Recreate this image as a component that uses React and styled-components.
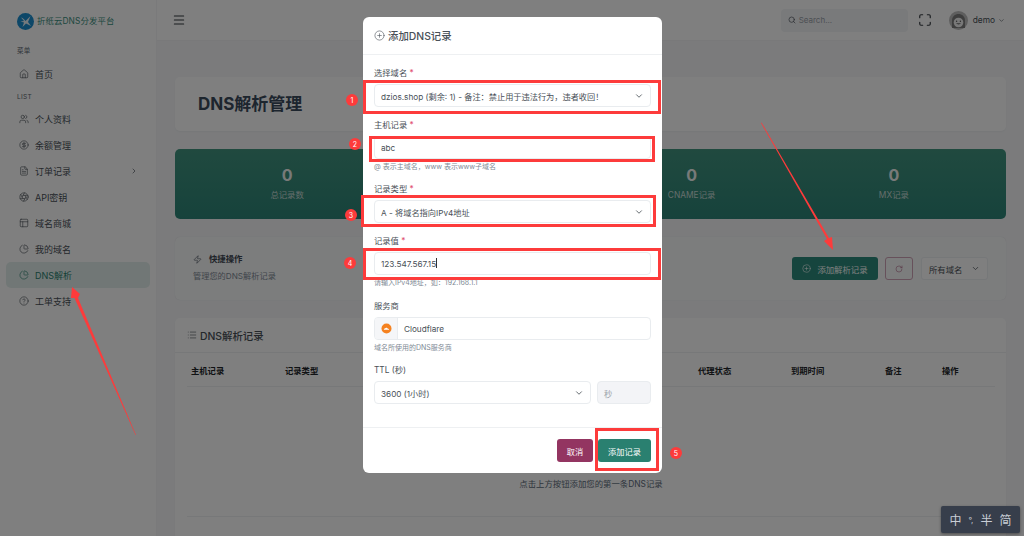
import React from "react";
import styled, { createGlobalStyle } from "styled-components";
import {
  House, Users, CircleDollarSign, FileText, Aperture, PanelsTopLeft, ChartPie, CircleHelp,
  ChevronRight, ChevronDown, Search, Maximize, CirclePlus, RotateCw, Zap, List, Menu,
} from "lucide-react";

const Global = createGlobalStyle`
  html, body { margin: 0; padding: 0; background: #fff; }
  * { box-sizing: border-box; }
  body { font-family: Inter, "Noto Sans CJK SC", sans-serif; color: #495057; }
`;

const Page = styled.div`
  position: relative; width: 1024px; height: 536px; overflow: hidden; display: flex; background: #fff;
`;
const Sidebar = styled.aside`
  width: 157px; flex: none; height: 100%; background: #fff; border-right: 1px solid #f4f4f6;
  padding: 13px 6px 0; display: flex; flex-direction: column;
`;
const Brand = styled.div`
  display: flex; align-items: center; gap: 3px; height: 17px; padding-left: 11px; margin-bottom: 14px;
  font-size: 8.4px; color: #3a8f7e; letter-spacing: .1px; line-height: 14px;
`;
const BrandText = styled.span`position: relative; top: -1px;`;
const SectionLabel = styled.div`
  font-size: 6.5px; height: 14px; line-height: 14px; color: #5c6670; padding-left: 11px; letter-spacing: .3px;
  margin-top: ${p => p.$top || 0}px; margin-bottom: ${p => p.$bottom || 2}px;
`;
const NavItem = styled.div`
  height: 26px; display: flex; align-items: center; gap: 6px; padding: 0 12px 0 13px; border-radius: 5px;
  font-size: 9px; color: ${p => (p.$active ? "#2a7f6f" : "#495057")};
  background: ${p => (p.$active ? "#e3efec" : "transparent")};
  svg { flex: none; }
`;
const NavText = styled.span`flex: 1;`;
const Main = styled.main`flex: 1; min-width: 0; display: flex; flex-direction: column; background: #f6f7f9;`;
const Topbar = styled.header`
  height: 41px; flex: none; background: #fff; display: flex; align-items: center; padding: 0 19px 0 15px; border-bottom: 1px solid #f2f2f4;
`;
const TopSpacer = styled.div`flex: 1;`;
const SearchBox = styled.div`
  width: 127px; height: 23px; border-radius: 4px; background: #f3f4f7; display: flex; align-items: center; gap: 3px;
  padding-left: 7px; font-size: 8px; color: #9aa1a9; margin-right: 10px;
`;
const UserName = styled.span`font-size: 8.4px; color: #495057; margin: 0 3px 0 5px;`;
const Avatar = styled.div`width: 19px; height: 19px; margin-left: 17px;`;
const Content = styled.div`
  flex: 1; padding: 36px 18px 0; display: flex; flex-direction: column; min-height: 0;
`;
const Card = styled.section`
  background: #fff; border-radius: 5px; box-shadow: 0 1px 2px rgba(0,0,0,.04); flex: none;
`;
const TitleCard = styled(Card)`
  height: 54px; display: flex; align-items: center; padding: 0 0 4px 23px; margin-bottom: 18px;
  font-size: 17px; font-weight: 700; color: #3a4a5c;
`;
const Stats = styled.section`
  height: 70px; flex: none; border-radius: 5px; background: linear-gradient(180deg, #41947f, #2d8578);
  display: grid; grid-template-columns: repeat(4, 1fr); padding: 0 11px; margin-bottom: 18px;
`;
const Stat = styled.div`display: flex; flex-direction: column; align-items: center; padding-top: 16px; color: #fff;`;
const StatNum = styled.div`font-size: 16px; font-weight: 700; line-height: 20px; color: #f0f4f3;`;
const StatLabel = styled.div`font-size: 8.4px; line-height: 12px; margin-top: 4px; color: #c9dcd8;`;
const QuickCard = styled(Card)`
  height: 63px; background: #f9fafb; padding: 0 18px; display: flex; align-items: center; box-shadow: 0 0 1px rgba(0,0,0,.12);
  margin-bottom: 18px;
`;
const QuickInfo = styled.div`flex: 1; padding-bottom: 2px;`;
const QuickTitle = styled.div`
  display: flex; align-items: center; gap: 7px; font-size: 8.4px; font-weight: 700; color: #3f4954; line-height: 12px;
`;
const QuickDesc = styled.div`font-size: 8.2px; line-height: 12px; color: #7f8b96; margin-top: 5px;`;
const Actions = styled.div`display: flex; gap: 7px; align-items: center;`;
const AddBtn = styled.div`
  width: 86px; height: 23px; border-radius: 3px; background: #2c8b7d; color: #fff; font-size: 8.4px;
  display: flex; align-items: center; justify-content: center; gap: 6px;
`;
const RefreshBtn = styled.div`
  width: 28px; height: 23px; border-radius: 3px; border: 1px solid #cfa3b6; color: #a85a7c; display: flex; align-items: center; justify-content: center;
`;
const DomainSelect = styled.div`
  width: 67px; height: 23px; border-radius: 3px; background: #fff; border: 1px solid #edf0f3; display: flex; align-items: center;
  justify-content: space-between; padding: 0 7px; font-size: 8.4px; color: #495057; margin-left: 1px;
`;
const RecordsCard = styled(Card)`flex: 1; min-height: 240px;`;
const RecordsHead = styled.div`
  height: 35px; border-bottom: 1px solid #eef0f2; display: flex; align-items: center; gap: 3px; padding-left: 12px;
  font-size: 10.4px; font-weight: 500; color: #495057;
`;
const TableWrap = styled.div`margin: 0 11px 0 12px; height: 164px; border-bottom: 1px solid #eef0f2;`;
const TableHead = styled.div`
  height: 34px; border-bottom: 1px solid #eef0f2; display: grid; align-items: center;
  grid-template-columns: 94px 413px 93px 94px 57px 1fr; padding-left: 4px;
  font-size: 8.3px; font-weight: 700; color: #212529;
`;
const EmptyText = styled.div`
  font-size: 8.4px; color: #5c6b7a; text-align: center; margin-top: 90px;
`;

const Backdrop = styled.div`position: absolute; inset: 0; background: rgba(0,0,0,.5);`;
const Modal = styled.div`
  position: absolute; left: 363px; top: 17px; width: 299px; height: 456px; border-radius: 6px; background: #fff;
  display: flex; flex-direction: column;
`;
const ModalHead = styled.div`
  height: 38px; flex: none; border-bottom: 1px solid #eef0f2; display: flex; align-items: center; gap: 3px; padding-left: 11px;
  font-size: 10.4px; font-weight: 500; color: #495057;
`;
const ModalBody = styled.div`flex: 1; padding: 12px 11px 0; display: flex; flex-direction: column;`;
const Field = styled.div`margin-bottom: ${p => p.$gap}px;`;
const Label = styled.div`
  font-size: 8.3px; line-height: 12px; height: 12px; color: #495057; margin-bottom: 5px;
  b { color: #e0506f; font-weight: 400; }
`;
const Control = styled.div`
  height: 23px; border: 1px solid #e9ecef; border-radius: 4px; background: ${p => (p.$muted ? "#f3f4f7" : "#fff")};
  display: flex; align-items: center; justify-content: space-between; padding: 0 6px;
  font-size: 8.2px; color: ${p => (p.$muted ? "#9aa1a9" : "#495057")};
  flex: ${p => p.$flex || "none"}; width: ${p => (p.$w ? p.$w + "px" : "auto")}; overflow: hidden; white-space: nowrap;
`;
const Caret = styled.span`display: inline-block; width: 1px; height: 10px; background: #333; vertical-align: -1.5px;`;
const Help = styled.div`font-size: 7px; line-height: 10px; color: #7f8b96; margin-top: 3px;`;
const Group = styled.div`
  height: 23px; border: 1px solid #e9ecef; border-radius: 4px; display: flex; align-items: stretch; overflow: hidden; font-size: 8.2px; color: #495057;
`;
const Addon = styled.div`
  width: 23px; background: #f5f6f8; border-right: 1px solid #e9ecef; display: flex; align-items: center; justify-content: center;
`;
const GroupText = styled.div`padding-left: 6px; display: flex; align-items: center;`;
const Row = styled.div`display: flex; gap: 6px;`;
const ModalFoot = styled.div`
  height: 46px; flex: none; border-top: 1px solid #eef0f2; display: flex; justify-content: flex-end; align-items: flex-start;
  gap: 5px; padding: 11px 11px 0 0;
`;
const FootBtn = styled.div`
  height: 23px; width: ${p => p.$w}px; border-radius: 3px; background: ${p => p.$bg}; color: #fff; font-size: 8.2px;
  display: flex; align-items: center; justify-content: center;
`;

const RedBox = styled.div`
  position: absolute; left: ${p => p.$x}px; top: ${p => p.$y}px; width: ${p => p.$w}px; height: ${p => p.$h}px;
  border: 3px solid #fd3b3b;
`;
const Badge = styled.div`
  position: absolute; left: ${p => p.$x - 6}px; top: ${p => p.$y - 6}px; width: 12px; height: 12px; border-radius: 50%;
  background: #fd3b3b; color: #fff; font-size: 7px; display: flex; align-items: center; justify-content: center;
`;
const ArrowLayer = styled.svg`position: absolute; left: 0; top: 0; width: 1024px; height: 536px; pointer-events: none;`;
const Ime = styled.div`
  position: absolute; left: 941px; top: 506px; width: 79px; height: 27px; background: #373e4b; border-radius: 2px;
  box-shadow: 0 1px 3px rgba(0,0,0,.4); color: #c9ced6; font-size: 12px; display: flex; align-items: center;
  justify-content: center; gap: 7px;
`;
const ImeDots = styled.span`font-size: 8px;`;

const Logo = () => (
  <svg width="17" height="17" viewBox="0 0 17 17">
    <circle cx="8.5" cy="8.5" r="8.5" fill="#1b8fd0" />
    <path d="M4 4.500c2 .5 3.500 2 4.500 3.500L13.500 3 11 9l3 4-5-2.500L5.500 14 7 9.500 3.500 8.500 7 8z" fill="#e8f4fb" />
  </svg>
);
const Face = () => (
  <svg width="19" height="19" viewBox="0 0 19 19">
    <circle cx="9.5" cy="9.5" r="9.5" fill="#bdbdbd" />
    <path d="M3 17V9.500C3 5.500 6 3 9.500 3S16 5.500 16 9.500V17z" fill="#7d7d7d" />
    <circle cx="9.500" cy="11.500" r="4.800" fill="#f1f1f1" />
    <circle cx="7.600" cy="10.300" r=".7" fill="#555" />
    <circle cx="11.400" cy="10.300" r=".7" fill="#555" />
    <path d="M7.200 12.300c.6 1.500 4 1.500 4.600 0z" fill="#666" />
  </svg>
);
const CloudIcon = () => (
  <svg width="11" height="11" viewBox="0 0 11 11">
    <circle cx="5.500" cy="5.500" r="5" fill="#f58220" />
    <path d="M2.800 6.800c0-1 .7-1.300 1.200-1.300.3-.9 2.400-1 2.800.2.800 0 1.400.4 1.400 1.100z" fill="#fff" />
  </svg>
);

const nav = [
  ["个人资料", Users], ["余额管理", CircleDollarSign], ["订单记录", FileText, true], ["API密钥", Aperture],
  ["域名商城", PanelsTopLeft], ["我的域名", ChartPie],
];

const Required = () => <b> *</b>;
const Arrow = ({ size = 10 }) => <ChevronDown size={size} strokeWidth={2} color="#495057" />;

export default function App() {
  return (
    <Page>
      <Global />
      <Sidebar>
        <Brand><Logo /><BrandText>折纸云DNS分发平台</BrandText></Brand>
        <SectionLabel $bottom={3}>菜单</SectionLabel>
        <NavItem><House size={10} strokeWidth={1.5} /><NavText>首页</NavText></NavItem>
        <SectionLabel $top={3} $bottom={2}>LIST</SectionLabel>
        {nav.map(([t, I, more]) => (
          <NavItem key={t}>
            <I size={10} strokeWidth={1.5} /><NavText>{t}</NavText>
            {more && <ChevronRight size={8} strokeWidth={2} />}
          </NavItem>
        ))}
        <NavItem $active><ChartPie size={10} strokeWidth={1.5} /><NavText>DNS解析</NavText></NavItem>
        <NavItem><CircleHelp size={10} strokeWidth={1.5} /><NavText>工单支持</NavText></NavItem>
      </Sidebar>
      <Main>
        <Topbar>
          <Menu size={14} color="#343a40" strokeWidth={1.8} />
          <TopSpacer />
          <SearchBox><Search size={8} color="#495057" strokeWidth={2} />Search...</SearchBox>
          <Maximize size={14} color="#343a40" strokeWidth={2} />
          <Avatar><Face /></Avatar>
          <UserName>demo</UserName>
          <ChevronDown size={7} strokeWidth={2} />
        </Topbar>
        <Content>
          <TitleCard>DNS解析管理</TitleCard>
          <Stats>
            <Stat><StatNum>0</StatNum><StatLabel>总记录数</StatLabel></Stat>
            <Stat />
            <Stat><StatNum>0</StatNum><StatLabel>CNAME记录</StatLabel></Stat>
            <Stat><StatNum>0</StatNum><StatLabel>MX记录</StatLabel></Stat>
          </Stats>
          <QuickCard>
            <QuickInfo>
              <QuickTitle><Zap size={9} strokeWidth={1.5} />快捷操作</QuickTitle>
              <QuickDesc>管理您的DNS解析记录</QuickDesc>
            </QuickInfo>
            <Actions>
              <AddBtn><CirclePlus size={9} strokeWidth={1.5} />添加解析记录</AddBtn>
              <RefreshBtn><RotateCw size={8} strokeWidth={1.6} /></RefreshBtn>
              <DomainSelect>所有域名<Arrow size={9} /></DomainSelect>
            </Actions>
          </QuickCard>
          <RecordsCard>
            <RecordsHead><List size={10} strokeWidth={1.5} />DNS解析记录</RecordsHead>
            <TableWrap>
              <TableHead>
                <span>主机记录</span><span>记录类型</span><span>代理状态</span><span>到期时间</span><span>备注</span><span>操作</span>
              </TableHead>
              <EmptyText>点击上方按钮添加您的第一条DNS记录</EmptyText>
            </TableWrap>
          </RecordsCard>
        </Content>
      </Main>

      <Backdrop />

      <Modal>
        <ModalHead><CirclePlus size={11} strokeWidth={1.3} />添加DNS记录</ModalHead>
        <ModalBody>
          <Field $gap={12}>
            <Label>选择域名<Required /></Label>
            <Control>dzios.shop (剩余: 1) - 备注：禁止用于违法行为，违者收回！<Arrow /></Control>
          </Field>
          <Field $gap={11}>
            <Label>主机记录<Required /></Label>
            <Control>abc</Control>
            <Help>@ 表示主域名，www 表示www子域名</Help>
          </Field>
          <Field $gap={12}>
            <Label>记录类型<Required /></Label>
            <Control>A - 将域名指向IPv4地址<Arrow /></Control>
          </Field>
          <Field $gap={12}>
            <Label>记录值<Required /></Label>
            <Control><span>123.547.567.15<Caret /></span></Control>
            <Help>请输入IPv4地址，如：192.168.1.1</Help>
          </Field>
          <Field $gap={11}>
            <Label>服务商</Label>
            <Group>
              <Addon><CloudIcon /></Addon>
              <GroupText>Cloudflare</GroupText>
            </Group>
            <Help>域名所使用的DNS服务商</Help>
          </Field>
          <Field $gap={0}>
            <Label>TTL (秒)</Label>
            <Row>
              <Control $flex="1">3600 (1小时)<Arrow /></Control>
              <Control $muted $w={54}>秒</Control>
            </Row>
          </Field>
        </ModalBody>
        <ModalFoot>
          <FootBtn $w={36} $bg="#933561">取消</FootBtn>
          <FootBtn $w={53} $bg="#2a8070">添加记录</FootBtn>
        </ModalFoot>
      </Modal>

      <RedBox $x={363} $y={80} $w={298} $h={34} />
      <RedBox $x={369} $y={136} $w={286} $h={26} />
      <RedBox $x={361} $y={195} $w={295} $h={32} />
      <RedBox $x={363} $y={248} $w={298} $h={32} />
      <RedBox $x={595} $y={428} $w={64} $h={43} />
      <Badge $x={352} $y={100}>1</Badge>
      <Badge $x={355} $y={144}>2</Badge>
      <Badge $x={351} $y={215}>3</Badge>
      <Badge $x={350} $y={263}>4</Badge>
      <Badge $x={676} $y={453}>5</Badge>

      <ArrowLayer viewBox="0 0 1024 536">
        <polygon points="136,435 135.500,435 74.500,298 71,298 72,287 80,294 78,298" fill="#fd3b3b" />
        <polygon points="761,123 761.500,122.500 829,238 832,237 833,250 824,241 827,239" fill="#fd3b3b" />
      </ArrowLayer>

      <Ime>中<ImeDots>°,</ImeDots>半<span>简</span></Ime>
    </Page>
  );
}
